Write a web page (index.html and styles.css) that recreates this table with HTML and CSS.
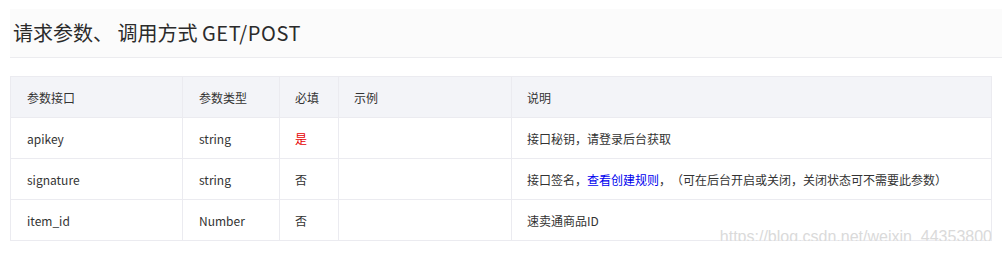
FILE: index.html
```html
<!DOCTYPE html>
<html lang="zh">
<head>
<meta charset="utf-8">
<link rel="stylesheet" href="styles.css">
</head>
<body>
<div class="page">
  <h2 class="title">请求参数、 调用方式 <span class="latin">GET/POST</span></h2>
  <div class="table-wrap">
    <table class="params">
      <colgroup>
        <col class="c1"><col class="c2"><col class="c3"><col class="c4"><col class="c5">
      </colgroup>
      <thead>
        <tr><th>参数接口</th><th>参数类型</th><th>必填</th><th>示例</th><th>说明</th></tr>
      </thead>
      <tbody>
        <tr><td>apikey</td><td>string</td><td class="req">是</td><td></td><td>接口秘钥，请登录后台获取</td></tr>
        <tr><td>signature</td><td>string</td><td>否</td><td></td><td>接口签名，<a class="link" href="#">查看创建规则</a>，（可在后台开启或关闭，关闭状态可不需要此参数）</td></tr>
        <tr><td>item_id</td><td>Number</td><td>否</td><td></td><td>速卖通商品ID</td></tr>
      </tbody>
    </table>
    <span class="watermark">https://blog.csdn.net/weixin_44353800</span>
  </div>
</div>
</body>
</html>
```
FILE: styles.css
```css
html, body {
  margin: 0;
  padding: 0;
  background: #ffffff;
}
body {
  font-family: "Noto Sans CJK SC", "Noto Sans", sans-serif;
  color: #333333;
  text-spacing-trim: space-all;
}
.page {
  padding: 9px 0 0 10px;
}
.title {
  margin: 0;
  height: 48px;
  line-height: 48px;
  padding-left: 3px;
  background: #fbfbfb;
  border-bottom: 1px solid #ececef;
  font-size: 20px;
  font-weight: normal;
  color: #2b2b2b;
}
.latin {
  letter-spacing: 0.6px;
}
.table-wrap {
  position: relative;
  margin-top: 18px;
  width: 982px;
}
.params {
  width: 982px;
  border-collapse: collapse;
  table-layout: fixed;
  font-size: 12px;
}
.c1 { width: 172px; }
.c2 { width: 97px; }
.c3 { width: 59px; }
.c4 { width: 173px; }
.params th,
.params td {
  border: 1px solid #ebebf0;
  height: 40px;
  padding: 0 15px;
  text-align: left;
  font-weight: normal;
  color: #333333;
  white-space: nowrap;
}
.params th:first-child,
.params td:first-child {
  padding-left: 16px;
}
.params th:nth-child(2),
.params td:nth-child(2) {
  padding-left: 16px;
}
.params thead th {
  background: #f3f4f8;
}
.params td.req {
  color: #e60000;
}
.link {
  color: #0000ee;
  text-decoration: none;
}
.watermark {
  position: absolute;
  right: 0;
  bottom: -5px;
  font-family: "Liberation Sans", Arial, sans-serif;
  font-size: 16px;
  color: #dadada;
  text-shadow: 0 0 1px #ffffff;
  pointer-events: none;
}
```
